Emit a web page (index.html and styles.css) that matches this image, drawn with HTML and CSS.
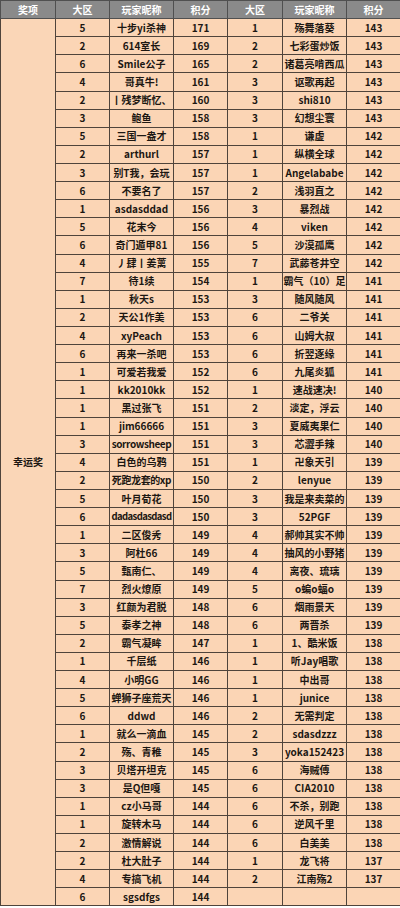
FILE: index.html
```html
<!DOCTYPE html>
<html lang="zh-CN">
<head>
<meta charset="utf-8">
<title>幸运奖</title>
<link rel="stylesheet" href="styles.css">
</head>
<body>
<table class="board">
<colgroup>
<col class="c-prize"><col class="c-zone"><col class="c-name"><col class="c-score"><col class="c-zone2"><col class="c-name"><col class="c-score">
</colgroup>
<thead>
<tr><th>奖项</th><th>大区</th><th>玩家昵称</th><th>积分</th><th>大区</th><th>玩家昵称</th><th>积分</th></tr>
</thead>
<tbody>
<tr><td class="prize" rowspan="49">幸运奖</td><td>5</td><td>十步yi杀神</td><td>171</td><td>1</td><td>殇舞落葵</td><td>143</td></tr>
<tr><td>2</td><td>614室长</td><td>169</td><td>2</td><td>七彩蛋炒饭</td><td>143</td></tr>
<tr><td>6</td><td>Smile公子</td><td>165</td><td>2</td><td>诸葛亮啃西瓜</td><td>143</td></tr>
<tr><td>4</td><td>哥真牛!</td><td>161</td><td>3</td><td>讴歌再起</td><td>143</td></tr>
<tr><td>2</td><td>丨残梦断忆、</td><td>160</td><td>3</td><td>shi810</td><td>143</td></tr>
<tr><td>3</td><td>鲍鱼</td><td>158</td><td>3</td><td>幻想尘寰</td><td>143</td></tr>
<tr><td>5</td><td>三国一盎才</td><td>158</td><td>1</td><td>谦虚</td><td>142</td></tr>
<tr><td>2</td><td>arthurl</td><td>157</td><td>1</td><td>纵横全球</td><td>142</td></tr>
<tr><td>3</td><td>别T我，会玩</td><td>157</td><td>1</td><td>Angelababe</td><td>142</td></tr>
<tr><td>6</td><td>不要名了</td><td>157</td><td>2</td><td>浅羽直之</td><td>142</td></tr>
<tr><td>1</td><td>asdasddad</td><td>156</td><td>3</td><td>暴烈战</td><td>142</td></tr>
<tr><td>5</td><td>花末今</td><td>156</td><td>4</td><td>viken</td><td>142</td></tr>
<tr><td>6</td><td>奇门遁甲81</td><td>156</td><td>5</td><td>沙漠孤鹰</td><td>142</td></tr>
<tr><td>4</td><td>丿肆丨姜蓠</td><td>155</td><td>7</td><td>武藤苍井空</td><td>142</td></tr>
<tr><td>7</td><td>待1续</td><td>154</td><td>1</td><td>霸气（10）足</td><td>141</td></tr>
<tr><td>1</td><td>秋天s</td><td>153</td><td>3</td><td>随风随风</td><td>141</td></tr>
<tr><td>2</td><td>天公1作美</td><td>153</td><td>6</td><td>二爷关</td><td>141</td></tr>
<tr><td>4</td><td>xyPeach</td><td>153</td><td>6</td><td>山姆大叔</td><td>141</td></tr>
<tr><td>6</td><td>再来一杀吧</td><td>153</td><td>6</td><td>折翌逐缘</td><td>141</td></tr>
<tr><td>1</td><td>可爱若我爱</td><td>152</td><td>6</td><td>九尾炎狐</td><td>141</td></tr>
<tr><td>1</td><td>kk2010kk</td><td>152</td><td>1</td><td>速战速决!</td><td>140</td></tr>
<tr><td>1</td><td>黑过张飞</td><td>151</td><td>2</td><td>淡定，浮云</td><td>140</td></tr>
<tr><td>1</td><td>jim66666</td><td>151</td><td>3</td><td>夏威夷果仁</td><td>140</td></tr>
<tr><td>3</td><td class="tight">sorrowsheep</td><td>151</td><td>3</td><td>芯澀手辣</td><td>140</td></tr>
<tr><td>4</td><td>白色的乌鸦</td><td>151</td><td>1</td><td>卍象天引</td><td>139</td></tr>
<tr><td>2</td><td class="tight">死跑龙套的xp</td><td>150</td><td>2</td><td>lenyue</td><td>139</td></tr>
<tr><td>5</td><td>叶月荀花</td><td>150</td><td>3</td><td>我是来卖菜的</td><td>139</td></tr>
<tr><td>6</td><td class="tighter">dadasdasdasd</td><td>150</td><td>3</td><td>52PGF</td><td>139</td></tr>
<tr><td>1</td><td>二区俊秀</td><td>149</td><td>4</td><td>郝帅其实不帅</td><td>139</td></tr>
<tr><td>3</td><td>阿杜66</td><td>149</td><td>4</td><td>抽风的小野猪</td><td>139</td></tr>
<tr><td>5</td><td>甄南仁、</td><td>149</td><td>4</td><td>离夜、琉璃</td><td>139</td></tr>
<tr><td>7</td><td>烈火燎原</td><td>149</td><td>5</td><td>o蝙o蝠o</td><td>139</td></tr>
<tr><td>3</td><td>红颜为君脱</td><td>148</td><td>6</td><td>烟雨景天</td><td>139</td></tr>
<tr><td>5</td><td>泰孝之神</td><td>148</td><td>6</td><td>两晋杀</td><td>139</td></tr>
<tr><td>2</td><td>霸气凝眸</td><td>147</td><td>1</td><td>1、酷米饭</td><td>138</td></tr>
<tr><td>1</td><td>千层纸</td><td>146</td><td>1</td><td>听Jay唱歌</td><td>138</td></tr>
<tr><td>4</td><td>小明GG</td><td>146</td><td>1</td><td>中出哥</td><td>138</td></tr>
<tr><td>5</td><td>蝉狮子座荒天</td><td>146</td><td>1</td><td>junice</td><td>138</td></tr>
<tr><td>6</td><td>ddwd</td><td>146</td><td>2</td><td>无需判定</td><td>138</td></tr>
<tr><td>1</td><td>就么一滴血</td><td>145</td><td>2</td><td>sdasdzzz</td><td>138</td></tr>
<tr><td>2</td><td>殇、青稚</td><td>145</td><td>3</td><td>yoka152423</td><td>138</td></tr>
<tr><td>3</td><td>贝塔开坦克</td><td>145</td><td>6</td><td>海贼傅</td><td>138</td></tr>
<tr><td>3</td><td>是Q但嘎</td><td>145</td><td>6</td><td>CIA2010</td><td>138</td></tr>
<tr><td>1</td><td>cz小马哥</td><td>144</td><td>6</td><td>不杀，别跑</td><td>138</td></tr>
<tr><td>1</td><td>旋转木马</td><td>144</td><td>6</td><td>逆风千里</td><td>138</td></tr>
<tr><td>2</td><td>激情解说</td><td>144</td><td>6</td><td>白美美</td><td>138</td></tr>
<tr><td>2</td><td>杜大肚子</td><td>144</td><td>1</td><td>龙飞将</td><td>137</td></tr>
<tr><td>4</td><td>专搞飞机</td><td>144</td><td>2</td><td>江南殇2</td><td>137</td></tr>
<tr><td>6</td><td>sgsdfgs</td><td>144</td><td></td><td></td><td></td></tr>
</tbody>
</table>
</body>
</html>
```
FILE: styles.css
```css
html, body {
  margin: 0;
  padding: 0;
  background: #ffffff;
}

.board {
  width: 400px;
  border-collapse: collapse;
  table-layout: fixed;
  font-family: "Noto Sans CJK SC", "Noto Sans", sans-serif;
  font-size: 10px;
  font-weight: bold;
  line-height: 1;
  color: #1c1712;
}

.c-prize { width: 55px; }
.c-zone { width: 54px; }
.c-zone2 { width: 55px; }
.c-name { width: 64px; }
.c-score { width: 54px; }

.board tr {
  height: 18.12px;
}

.board th,
.board td {
  padding: 0;
  text-align: center;
  vertical-align: middle;
  white-space: nowrap;
  overflow: hidden;
  border: 1px solid #4f443b;
}

.board th {
  background: #8a8a8a;
  color: #ffffff;
  border-color: #505050;
  font-size: 10px;
}

.board td {
  background: #fbd5b5;
}

.board td.prize {
  background: #fad6b7;
}

.board td.tight {
  letter-spacing: -0.4px;
}

.board td.tighter {
  font-size: 9.5px;
  letter-spacing: -0.6px;
}
```
